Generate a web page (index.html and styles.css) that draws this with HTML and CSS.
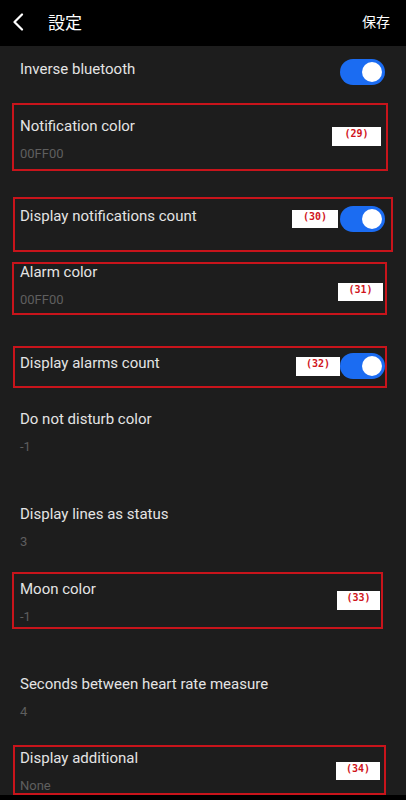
FILE: index.html
```html
<!DOCTYPE html>
<html lang="ja">
<head>
    <meta charset="UTF-8">
    <meta name="viewport" content="width=device-width, initial-scale=1.0">
    <title>設定</title>
    <link rel="stylesheet" href="styles.css">
</head>
<body>
    <div class="header">
        <svg class="back" width="12" height="18" viewBox="0 0 12 18">
            <path d="M10 1.5 L2.5 9 L10 16.5" fill="none" stroke="#fff" stroke-width="2.2" stroke-linecap="round" stroke-linejoin="round"/>
        </svg>
        <div class="title">設定</div>
        <div class="save">保存</div>
    </div>

    <div class="list">
        <div class="item switch-row">
            <div class="label">Inverse bluetooth</div>
            <div class="toggle"><span class="knob"></span></div>
        </div>

        <div class="item gap-m">
            <div class="label">Notification color</div>
            <div class="value">00FF00</div>
            <div class="mark mark-29"></div>
            <div class="tag tag-29">(29)</div>
        </div>

        <div class="item switch-row">
            <div class="label">Display notifications count</div>
            <div class="toggle"><span class="knob"></span></div>
            <div class="mark mark-30"></div>
            <div class="tag tag-30">(30)</div>
        </div>

        <div class="item gap-m2">
            <div class="label">Alarm color</div>
            <div class="value">00FF00</div>
            <div class="mark mark-31"></div>
            <div class="tag tag-31">(31)</div>
        </div>

        <div class="item switch-row">
            <div class="label">Display alarms count</div>
            <div class="toggle"><span class="knob"></span></div>
            <div class="mark mark-32"></div>
            <div class="tag tag-32">(32)</div>
        </div>

        <div class="item gap-l">
            <div class="label">Do not disturb color</div>
            <div class="value">-1</div>
        </div>

        <div class="item gap-s">
            <div class="label">Display lines as status</div>
            <div class="value">3</div>
        </div>

        <div class="item gap-l">
            <div class="label">Moon color</div>
            <div class="value">-1</div>
            <div class="mark mark-33"></div>
            <div class="tag tag-33">(33)</div>
        </div>

        <div class="item gap-s2">
            <div class="label">Seconds between heart rate measure</div>
            <div class="value">4</div>
        </div>

        <div class="item last">
            <div class="label">Display additional</div>
            <div class="value">None</div>
            <div class="mark mark-34"></div>
            <div class="tag tag-34">(34)</div>
        </div>
    </div>
</body>
</html>
```

FILE: styles.css
```css
body {
    margin: 0;
    background-color: #000;
    font-family: Roboto, "Noto Sans", sans-serif;
    width: 406px;
    height: 800px;
    overflow: hidden;
}

.header {
    height: 46px;
    display: flex;
    align-items: center;
    background-color: #000;
    color: #fff;
    padding: 0 16px 0 12px;
}

.back {
    margin-right: 24px;
    margin-top: -2px;
}

.title {
    flex: 1;
    font-family: "Noto Sans CJK JP", sans-serif;
    font-size: 17px;
    margin-top: -4px;
}

.save {
    font-family: "Noto Sans CJK JP", sans-serif;
    font-size: 14px;
    margin-top: -5px;
}

.list {
    background-color: #1d1d1d;
    padding-top: 11px;
    height: 738px;
}

.item {
    position: relative;
    padding: 0 21px 0 20px;
}

.label {
    font-size: 15px;
    line-height: 24px;
    color: #e4e4e4;
}

.value {
    font-size: 13px;
    line-height: 24px;
    margin-top: 4px;
    color: #5f5f5f;
}

.switch-row {
    display: flex;
    align-items: flex-start;
    justify-content: space-between;
    height: 56px;
}

.switch-row:first-child {
    height: 57px;
}

.toggle {
    width: 45px;
    height: 26px;
    margin-top: 2px;
    border-radius: 13px;
    background-color: #1b6cf2;
    display: flex;
    align-items: center;
    justify-content: flex-end;
    padding-right: 3px;
    box-sizing: border-box;
}

.knob {
    width: 20px;
    height: 20px;
    border-radius: 50%;
    background-color: #fff;
}

.gap-m { height: 90px; }
.gap-m2 { height: 91px; }
.gap-l { height: 95px; }
.gap-s { height: 75px; }
.gap-s2 { height: 74px; }
.last { height: 60px; }

/* annotation overlays */
.mark {
    position: absolute;
    border: 2px solid #c8141b;
    box-sizing: border-box;
}

.tag {
    position: absolute;
    background-color: #fff;
    color: #d0141b;
    font-family: "DejaVu Sans Mono", monospace;
    font-weight: bold;
    font-size: 10px;
    line-height: 12px;
    text-align: center;
    box-sizing: border-box;
    padding-top: 1px;
}

.mark-29 { top: -11px; left: 12px; width: 376px; height: 68px; }
.tag-29 { top: 13px; left: 332px; width: 49px; height: 19px; }

.mark-30 { top: -7px; left: 13px; width: 380px; height: 55px; }
.tag-30 { top: 6px; left: 292px; width: 46px; height: 18px; }

.mark-31 { top: 2px; left: 12px; width: 375px; height: 53px; }
.tag-31 { top: 23px; left: 338px; width: 45px; height: 18px; }

.mark-32 { top: -5px; left: 13px; width: 374px; height: 42px; }
.tag-32 { top: 6px; left: 296px; width: 44px; height: 19px; }

.mark-33 { top: -5px; left: 12px; width: 371px; height: 57px; }
.tag-33 { top: 14px; left: 337px; width: 43px; height: 19px; }

.mark-34 { top: -1px; left: 13px; width: 373px; height: 50px; }
.tag-34 { top: 16px; left: 336px; width: 44px; height: 18px; }
```
